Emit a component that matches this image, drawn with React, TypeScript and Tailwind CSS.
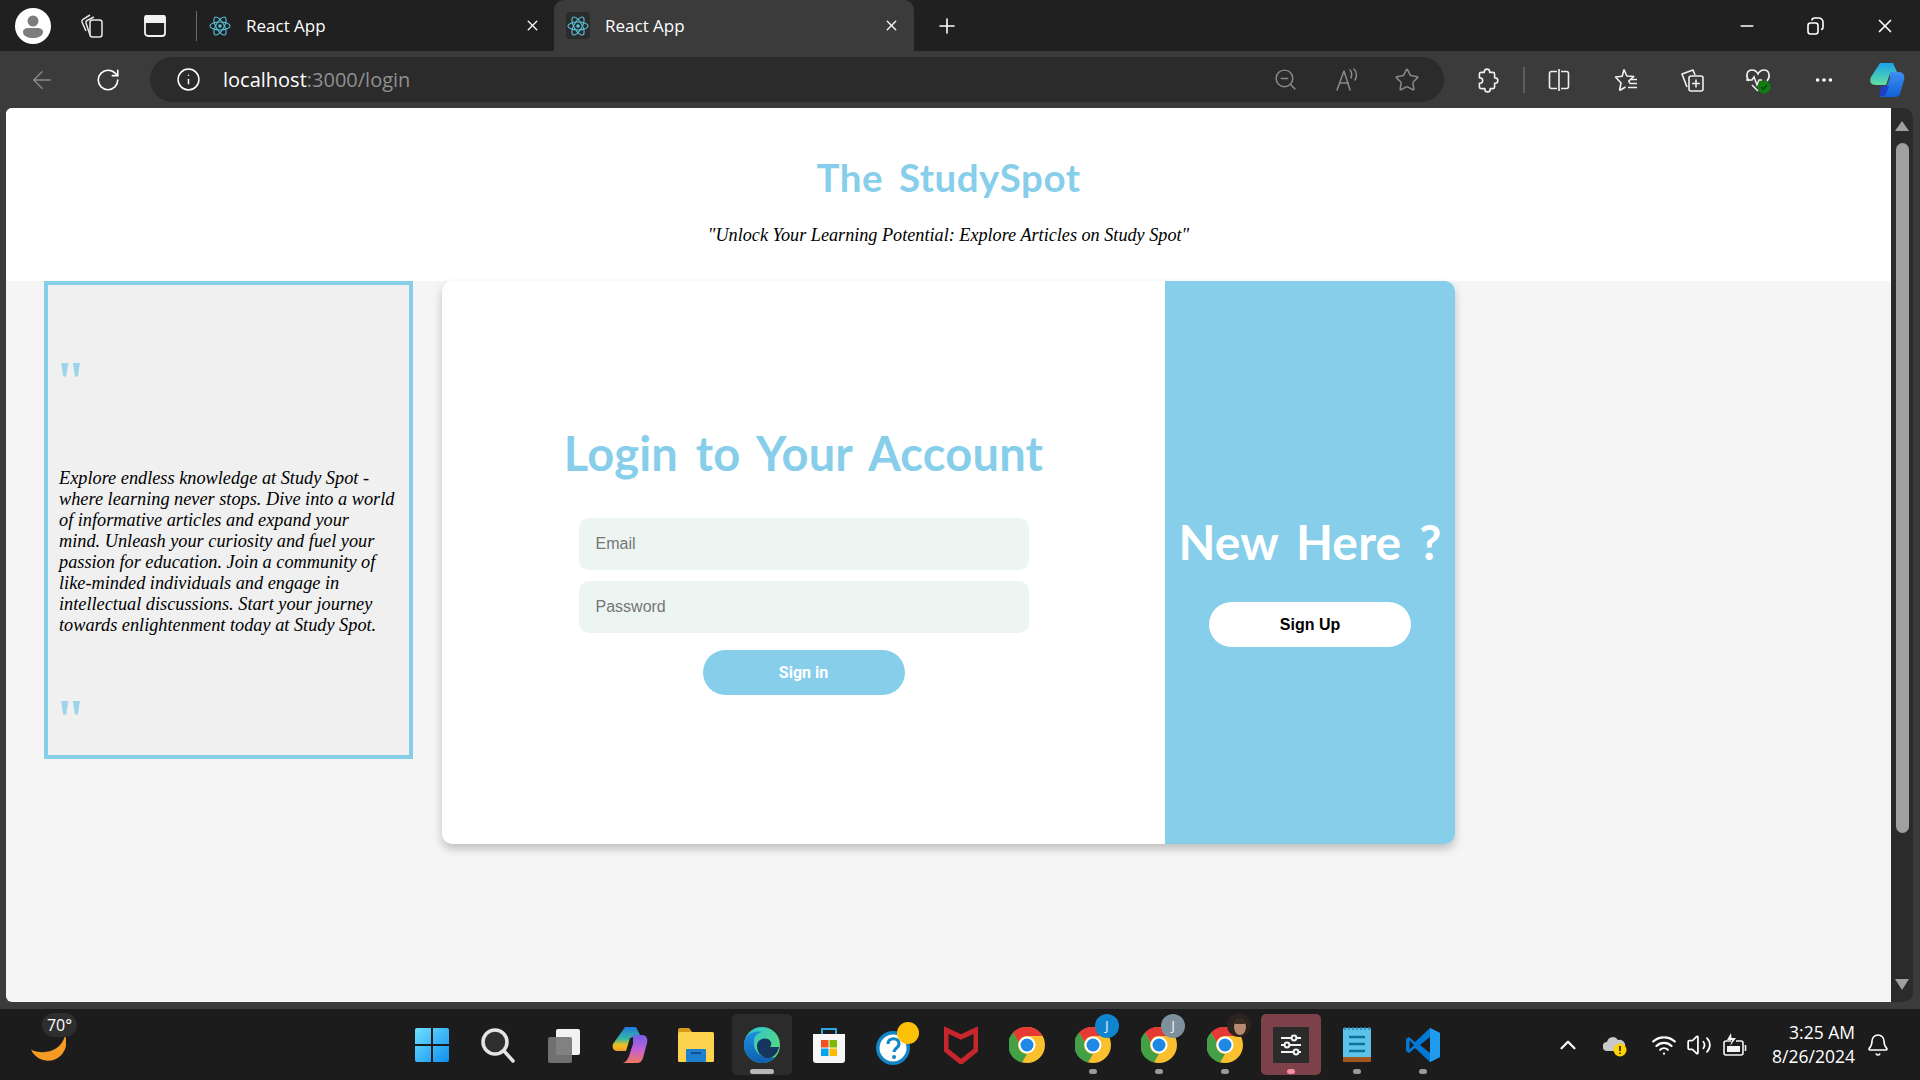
import { ArrowLeft, RotateCw, Info, ZoomOut, Star, MoreHorizontal, Minus, X, Plus, ChevronUp, Wifi, Volume2, Bell } from 'lucide-react';

function ReactIcon() {
  return (
    <svg width="22" height="22" viewBox="-12 -12 24 24" fill="none" stroke="#58c4dc" strokeWidth="1.2">
      <circle r="2" fill="#58c4dc" stroke="none" />
      <ellipse rx="11" ry="4.4" />
      <ellipse rx="11" ry="4.4" transform="rotate(60)" />
      <ellipse rx="11" ry="4.4" transform="rotate(120)" />
    </svg>
  );
}

function Avatar() {
  return (
    <svg width="36" height="36" viewBox="0 0 36 36">
      <circle cx="18" cy="18" r="18" fill="#fff" />
      <circle cx="18" cy="13" r="5.5" fill="#7d7d7d" />
      <path d="M8 24c0-3 3-4 5-4h10c2 0 5 1 5 4 0 4-5 6-10 6s-10-2-10-6z" fill="#7d7d7d" />
    </svg>
  );
}

function CollectionsIcon() {
  return (
    <svg width="26" height="26" viewBox="0 0 26 26" fill="none" stroke="#e8e8e8" strokeWidth="1.5" strokeLinejoin="round">
      <rect x="11" y="7" width="12" height="17" rx="2.5" />
      <path d="M11 22 7 10c-.3-1 .2-2 1-2.500L15 4" />
      <path d="M7 18 3 9c-.4-1 0-2 1-2.600L11 2" />
    </svg>
  );
}

function TabsIcon() {
  return (
    <svg width="24" height="24" viewBox="0 0 24 24" fill="none" stroke="#f2f2f2" strokeWidth="1.8">
      <rect x="2" y="2" width="20" height="20" rx="3" />
      <path d="M2 3.5A1.5 1.5 0 0 1 3.5 2h17A1.5 1.5 0 0 1 22 3.5V8H2z" fill="#f2f2f2" />
    </svg>
  );
}

function ReadAloud() {
  return (
    <svg width="26" height="26" viewBox="0 0 26 26" fill="none" stroke="#8a8a8a" strokeWidth="1.5" strokeLinecap="round" strokeLinejoin="round">
      <path d="M3 23 10 4l6 19M5.500 16h9" />
      <path d="M16 3c2 2 2 5 1 8M20 2c3 3 3 8 1 11" />
    </svg>
  );
}

function PuzzleIcon() {
  return (
    <svg width="26" height="26" viewBox="0 0 24 24" fill="none" stroke="#f0f0f0" strokeWidth="1.5" strokeLinejoin="round">
      <path d="M9.500 4.500a2.500 2.500 0 0 1 5 0V5h3a1.500 1.500 0 0 1 1.500 1.500V10h.5a2.500 2.500 0 0 1 0 5H19v3.500a1.500 1.500 0 0 1-1.500 1.500H15v.5a2.500 2.500 0 0 1-5 0V20H6.500A1.500 1.500 0 0 1 5 18.500V15h.5a2.500 2.500 0 0 0 0-5H5V6.500A1.500 1.500 0 0 1 6.500 5h3z" />
    </svg>
  );
}

function SplitIcon() {
  return (
    <svg width="24" height="24" viewBox="0 0 24 24" fill="none" stroke="#f0f0f0" strokeWidth="1.6">
      <path d="M10 3.500H4.500a2 2 0 0 0-2 2v13a2 2 0 0 0 2 2H10M14 3.500h5.500a2 2 0 0 1 2 2v13a2 2 0 0 1-2 2H14M12 1v22" />
    </svg>
  );
}

function FavoritesIcon() {
  return (
    <svg width="26" height="26" viewBox="0 0 26 26" fill="none" stroke="#f0f0f0" strokeWidth="1.6" strokeLinejoin="round">
      <path d="M11 2.500 13.800 9l7 .5-5 4.500 1 2.500M6.500 23.500 8 16 2.500 10l6.700-.8L11 2.500M6.500 23.500l6-3.500" />
      <path d="M17 12.500h7M17 16.500h7M15 20.500h9" />
    </svg>
  );
}

function AddCollection() {
  return (
    <svg width="26" height="26" viewBox="0 0 26 26" fill="none" stroke="#f0f0f0" strokeWidth="1.6" strokeLinejoin="round">
      <rect x="10" y="9" width="14" height="15" rx="2" />
      <path d="M17 12.500v8M13 16.500h8" />
      <path d="M8 20 3 7l11-4 2 5" />
    </svg>
  );
}

function HeartIcon() {
  return (
    <svg width="30" height="30" viewBox="0 0 30 30" fill="none">
      <path d="M6 16C2 11 4 5 9 5c3 0 5 2 6 4 1-2 3-4 6-4 5 0 7 6 3 11" stroke="#f0f0f0" strokeWidth="1.6" />
      <path d="M3 15h6l2-3 3 8 2-5h3M9 20l6 6" stroke="#f0f0f0" strokeWidth="1.5" />
      <circle cx="21" cy="22" r="6.500" fill="#107c10" />
      <path d="m18.500 22 2 2 3.500-4" stroke="#0b3d0b" strokeWidth="1.3" />
    </svg>
  );
}

function CopilotIcon() {
  return (
    <svg width="36" height="36" viewBox="0 0 36 36">
      <defs>
        <linearGradient id="cpa" x1="0" y1="0" x2="0" y2="1">
          <stop offset="0" stopColor="#1aa3e8" />
          <stop offset="1" stopColor="#5fe0a0" />
        </linearGradient>
        <linearGradient id="cpb" x1="0" y1="0" x2="0" y2="1">
          <stop offset="0" stopColor="#3f8ff0" />
          <stop offset="1" stopColor="#0f62d8" />
        </linearGradient>
      </defs>
      <path d="M11 1h13l4 9-7 2-4 11H7C2 23 0 20 2 15z" fill="url(#cpa)" />
      <path d="M21 10h10c4 1 5 4 4 8l-4 14c-1 2-3 3-5 3H11l4-5 6-14z" fill="url(#cpb)" />
      <path d="M12 24h8l-4 10h-6z" fill="#1f3fc4" />
    </svg>
  );
}

function StartIcon() {
  return (
    <svg width="36" height="36" viewBox="0 0 36 36">
      <defs>
        <linearGradient id="win" x1="0" y1="0" x2="1" y2="1">
          <stop offset="0" stopColor="#6fe0ff" />
          <stop offset="1" stopColor="#0f8ff0" />
        </linearGradient>
      </defs>
      <path d="M1 3a2 2 0 0 1 2-2h14v16H1zM19 1h14a2 2 0 0 1 2 2v14H19zM1 19h16v16H3a2 2 0 0 1-2-2zM19 19h16v14a2 2 0 0 1-2 2H19z" fill="url(#win)" />
    </svg>
  );
}

function SearchIcon() {
  return (
    <svg width="36" height="36" viewBox="0 0 36 36" fill="none">
      <circle cx="15" cy="15" r="12" fill="#2e2e2e" stroke="#e4e4e4" strokeWidth="3.5" />
      <path d="m24 24 9 10" stroke="#e4e4e4" strokeWidth="3.5" strokeLinecap="round" />
    </svg>
  );
}

function TaskView() {
  return (
    <svg width="36" height="36" viewBox="0 0 36 36">
      <rect x="10" y="2" width="24" height="26" rx="2" fill="#f2f2f2" />
      <rect x="2" y="10" width="24" height="26" rx="2" fill="#777777" fillOpacity="0.92" />
    </svg>
  );
}

function TaskCopilot() {
  return (
    <svg width="36" height="38" viewBox="0 0 36 38">
      <defs>
        <linearGradient id="tca" x1="0" y1="0" x2="0" y2="1">
          <stop offset="0" stopColor="#1f7ae0" />
          <stop offset="0.5" stopColor="#38b8a0" />
          <stop offset="0.75" stopColor="#f0c020" />
          <stop offset="1" stopColor="#f0a030" />
        </linearGradient>
        <linearGradient id="tcb" x1="0" y1="0" x2="0" y2="1">
          <stop offset="0" stopColor="#6f5fe8" />
          <stop offset="0.5" stopColor="#c060d8" />
          <stop offset="1" stopColor="#f07860" />
        </linearGradient>
      </defs>
      <path d="M13 1h11l4 8-10 3-4 13H5c-4 0-5-4-4-7z" fill="url(#tca)" />
      <path d="M21 9h10c4 1 5 4 4 8l-4 15c-1 3-3 5-6 5H11c3-1 5-4 6-7l4-12z" fill="url(#tcb)" />
    </svg>
  );
}

function FilesIcon() {
  return (
    <svg width="36" height="36" viewBox="0 0 36 36">
      <path d="M0 3a2 2 0 0 1 2-2h9l4 5h-15z" fill="#d99a1c" />
      <rect x="0" y="5" width="36" height="30" rx="1.500" fill="#fdd34d" />
      <rect x="8" y="22" width="20" height="13" rx="1" fill="#1c7fd0" />
      <rect x="13" y="25" width="10" height="2" fill="#0d4f8f" />
    </svg>
  );
}

function EdgeIcon() {
  return (
    <svg width="38" height="38" viewBox="0 0 38 38">
      <defs>
        <linearGradient id="eda" x1="0" y1="0" x2="1" y2="1">
          <stop offset="0" stopColor="#2cc5d8" />
          <stop offset="1" stopColor="#5fdc6c" />
        </linearGradient>
        <linearGradient id="edb" x1="0" y1="0" x2="0" y2="1">
          <stop offset="0" stopColor="#1d8fe0" />
          <stop offset="1" stopColor="#0f5fb0" />
        </linearGradient>
      </defs>
      <circle cx="19" cy="19" r="18" fill="url(#eda)" />
      <path d="M1 19C1 9 10 4 19 6c-6 1-9 6-8 13 1 9 11 15 21 12-3 4-8 6-13 6C9 37 1 29 1 19z" fill="url(#edb)" />
      <path d="M14 20c0-6 6-9 11-7 4 2 4 6 2 8h9c-1 5-4 9-9 11-7 1-13-5-13-12z" fill="#16365f" />
    </svg>
  );
}

function StoreIcon() {
  return (
    <svg width="36" height="38" viewBox="0 0 36 38">
      <path d="M11 8V3h14v5" fill="none" stroke="#2ba8e0" strokeWidth="2" />
      <path d="M2 8h32v26a3 3 0 0 1-3 3H5a3 3 0 0 1-3-3z" fill="#f7f7f7" />
      <rect x="10" y="14" width="7.500" height="7.500" fill="#f25022" />
      <rect x="18.500" y="14" width="7.500" height="7.500" fill="#7fba00" />
      <rect x="10" y="22.500" width="7.500" height="7.500" fill="#00a4ef" />
      <rect x="18.500" y="22.500" width="7.500" height="7.500" fill="#ffb900" />
    </svg>
  );
}

function HelpIcon() {
  return (
    <svg width="46" height="46" viewBox="0 0 46 46" className="translate-x-[2px]">
      <circle cx="19" cy="26" r="17" fill="#1185c8" />
      <circle cx="19" cy="26" r="13.500" fill="#fff" />
      <path d="M14 22c0-7 11-7 11 0 0 4-5 4-5 8" fill="none" stroke="#1185c8" strokeWidth="3.200" />
      <circle cx="20" cy="35" r="2" fill="#1185c8" />
      <circle cx="34" cy="11" r="11" fill="#ffc107" />
    </svg>
  );
}

function ShieldIcon() {
  return (
    <svg width="34" height="38" viewBox="0 0 34 38">
      <path d="M2 4 17 11 32 4v20L17 36 2 24z" fill="none" stroke="#c8262c" strokeWidth="5" />
    </svg>
  );
}

function ChromeIcon() {
  return (
    <svg width="36" height="36" viewBox="0 0 36 36">
      <circle cx="18" cy="18" r="18" fill="#fbc02d" />
      <path d="M18 0a18 18 0 0 1 15.600 9H18a9 9 0 0 0-8.500 6L4 5.500A18 18 0 0 1 18 0z" fill="#e53935" />
      <path d="M4 5.500 9.500 15a9 9 0 0 0 8.500 12l-5 8.400A18 18 0 0 1 4 5.500z" fill="#43a047" />
      <circle cx="18" cy="18" r="8.500" fill="#fff" />
      <circle cx="18" cy="18" r="6.500" fill="#1e88e5" />
    </svg>
  );
}

function ChromeProfile({ badge }: { badge: 'blue' | 'gray' | 'photo' }) {
  return (
    <div className="relative">
      <ChromeIcon />
      {badge === 'blue' && (
        <span className="absolute -top-[13px] -right-[8px] flex h-[24px] w-[24px] items-center justify-center rounded-full bg-[#0f85d0] text-[12px] text-white">J</span>
      )}
      {badge === 'gray' && (
        <span className="absolute -top-[13px] -right-[8px] flex h-[24px] w-[24px] items-center justify-center rounded-full bg-[#7e909c] text-[12px] text-white">J</span>
      )}
      {badge === 'photo' && (
        <svg className="absolute -top-[14px] -right-[8px]" width="24" height="24" viewBox="0 0 24 24">
          <circle cx="12" cy="12" r="12" fill="#2a2320" />
          <ellipse cx="13" cy="14" rx="6" ry="8" fill="#b98a72" />
          <path d="M7 9c2-4 9-4 12 0l-1 2H8z" fill="#3a2a22" />
        </svg>
      )}
    </div>
  );
}

function SettingsTile() {
  return (
    <svg width="36" height="36" viewBox="0 0 36 36">
      <rect width="36" height="36" fill="#2b2b2b" />
      <g stroke="#f4f4f4" strokeWidth="2" fill="#2b2b2b">
        <path d="M8 11h20M8 18h20M8 25h20" />
        <circle cx="21" cy="11" r="2.400" />
        <circle cx="14" cy="18" r="2.400" />
        <circle cx="23" cy="25" r="2.400" />
      </g>
    </svg>
  );
}

function NotepadIcon() {
  return (
    <svg width="30" height="38" viewBox="0 0 30 38">
      <rect x="1" y="2" width="28" height="34" rx="1" fill="#5cc4e8" />
      <rect x="1" y="31" width="28" height="5" fill="#a0561e" />
      <path d="M3 1v3M7 1v3M11 1v3M15 1v3M19 1v3M23 1v3M27 1v3" stroke="#2c7fa8" strokeWidth="1.500" />
      <path d="M7 11h16M7 18h16M7 25h16" stroke="#0f6f9c" strokeWidth="2.500" />
    </svg>
  );
}

function VsCodeIcon() {
  return (
    <svg width="36" height="36" viewBox="0 0 36 36">
      <path d="M25 1 35 6v24l-10 5-15-14-6 5-3-2V12l3-2 6 5z" fill="#0078d4" />
      <path d="M25 1 35 6v24l-10 5z" fill="#1f9cf0" />
      <path d="M25 10 15 18l10 8z" fill="#1c1c1c" />
      <path d="M4.500 13.500 9 18l-4.500 4.500z" fill="#1c1c1c" />
    </svg>
  );
}

function CloudWarn() {
  return (
    <svg width="24" height="26" viewBox="0 0 24 26">
      <path d="M4 19a4 4 0 0 1 0-9 6 6 0 0 1 11-2 5 5 0 0 1 3 11z" fill="#c9c9c9" />
      <circle cx="17" cy="18" r="6.500" fill="#ffd400" />
      <path d="M17 14v5M17 20.500V22" stroke="#1c1c1c" strokeWidth="1.600" />
    </svg>
  );
}

function BatteryIcon() {
  return (
    <svg width="26" height="28" viewBox="0 0 26 28" fill="none" stroke="#f4f4f4" strokeWidth="1.600" strokeLinejoin="round">
      <path d="M9 10H4a2 2 0 0 0-2 2v10a2 2 0 0 0 2 2h15a2 2 0 0 0 2-2V12a2 2 0 0 0-2-2h-5" />
      <path d="M23.500 14v6" />
      <path d="M9 2 5 9h5l-2 6 6-8H9.500z" fill="#f4f4f4" stroke="none" />
      <rect x="5" y="15" width="13" height="6" fill="#f4f4f4" stroke="none" />
    </svg>
  );
}

function TaskItem({ children, tile, dot }: { children: React.ReactNode; tile?: string; dot?: string }) {
  return (
    <div className={`relative flex h-[61px] w-[60px] items-center justify-center rounded-[5px] ${tile ?? ''}`}>
      {children}
      {dot && <span className={`absolute bottom-[1px] h-[5px] rounded-full ${dot}`} />}
    </div>
  );
}

function Quote() {
  return <div className="-ml-[4px] h-[46px] text-[56px] leading-[46px] font-bold text-[#87ceeb] opacity-80">"</div>;
}

export default function App() {
  return (
    <div className="flex h-screen w-screen flex-col overflow-hidden bg-[#3b3b3b] [font-family:'Open_Sans',sans-serif]">
      {/* tab strip */}
      <div className="flex h-[51px] items-center bg-[#202020] text-white">
        <div className="ml-[15px]"><Avatar /></div>
        <div className="ml-[28px]"><CollectionsIcon /></div>
        <div className="ml-[38px]"><TabsIcon /></div>
        <div className="ml-[29px] h-[30px] w-px bg-[#6a6a6a]" />
        <div className="flex h-full w-[357px] items-center pl-[12px] pr-[13px]">
          <ReactIcon />
          <span className="ml-[15px] flex-1 text-[17px]">React App</span>
          <X size={17} strokeWidth={1.8} />
        </div>
        <div className="flex h-full w-[360px] items-center self-end rounded-t-[10px] bg-[#3b3b3b] pl-[12px] pr-[14px]">
          <span className="flex h-[27px] w-[24px] items-center justify-center rounded-[4px] bg-[#2b2b2b]"><ReactIcon /></span>
          <span className="ml-[15px] flex-1 text-[17px]">React App</span>
          <X size={17} strokeWidth={1.8} />
        </div>
        <Plus className="ml-[21px]" size={24} strokeWidth={1.6} />
        <div className="ml-auto flex items-center pr-[24px]">
          <Minus size={20} strokeWidth={1.8} />
          <svg className="ml-[49px]" width="18" height="18" viewBox="0 0 18 18" fill="none" stroke="#fff" strokeWidth="1.6">
            <rect x="2" y="6" width="10" height="11" rx="2.500" />
            <path d="M6 3.500C6 2 7 1 8.500 1H13c2 0 4 2 4 4v5c0 1.500-1 2.500-2 2.500" />
          </svg>
          <X className="ml-[50px]" size={22} strokeWidth={1.8} />
        </div>
      </div>

      {/* toolbar */}
      <div className="flex h-[57px] items-center text-white">
        <ArrowLeft className="ml-[28px] text-[#8a8a8a]" size={28} strokeWidth={1.2} />
        <RotateCw className="ml-[39px]" size={26} strokeWidth={1.5} />
        <div className="ml-[29px] flex h-[45px] w-[1294px] items-center rounded-full bg-[#2b2b2b] pl-[26px]">
          <Info size={25} strokeWidth={1.4} />
          <div className="ml-[22px] text-[20px]">localhost<span className="text-[#8f8f8f]">:3000/login</span></div>
          <div className="ml-auto flex items-center pr-[24px] text-[#8a8a8a]">
            <ZoomOut size={25} strokeWidth={1.4} />
            <span className="ml-[36px]"><ReadAloud /></span>
            <Star className="ml-[34px]" size={26} strokeWidth={1.4} />
          </div>
        </div>
        <span className="ml-[30px]"><PuzzleIcon /></span>
        <div className="ml-[23px] h-[26px] w-[2px] bg-[#5c5c5c]" />
        <span className="ml-[22px]"><SplitIcon /></span>
        <span className="ml-[42px]"><FavoritesIcon /></span>
        <span className="ml-[40px]"><AddCollection /></span>
        <span className="ml-[38px]"><HeartIcon /></span>
        <MoreHorizontal className="ml-[40px]" size={22} strokeWidth={2} />
        <span className="ml-[34px]"><CopilotIcon /></span>
      </div>

      {/* page + scrollbar */}
      <div className="flex h-[894px]">
        <div className="ml-[6px] flex w-[1885px] flex-col overflow-hidden rounded-l-[6px] bg-[#f5f5f5]">
          <header className="flex h-[173px] flex-col items-center bg-white">
            <h1 className="mt-[41px] text-[38.500px] leading-[56px] font-bold tracking-[0.5px] text-[#87ceeb] [font-family:'Lato',sans-serif] [word-spacing:6px]">The StudySpot</h1>
            <p className="mt-[18px] text-[18.200px] leading-[24px] text-black italic [font-family:'Liberation_Serif',serif]">"Unlock Your Learning Potential: Explore Articles on Study Spot"</p>
          </header>

          <div className="flex flex-1 items-start">
            <aside className="ml-[38px] flex h-[478px] w-[369px] flex-col border-4 border-[#87ceeb] bg-[#f0f0f0] px-[11px] [font-family:'Liberation_Serif',serif]">
              <div className="mt-[74px]"><Quote /></div>
              <p className="mt-[63px] text-[18.300px] leading-[21px] text-black italic">
                Explore endless knowledge at Study Spot -<br />
                where learning never stops. Dive into a world<br />
                of informative articles and expand your<br />
                mind. Unleash your curiosity and fuel your<br />
                passion for education. Join a community of<br />
                like-minded individuals and engage in<br />
                intellectual discussions. Start your journey<br />
                towards enlightenment today at Study Spot.
              </p>
              <div className="mt-[61px]"><Quote /></div>
            </aside>

            <main className="ml-[29px] flex h-[563px] w-[1013px] overflow-hidden rounded-[10px] bg-white shadow-[0_5px_10px_rgba(0,0,0,0.22)]">
              <div className="flex w-[723px] flex-col items-center pt-[139px]">
                <h2 className="text-[47px] leading-[66px] font-bold tracking-[0.2px] text-[#87ceeb] [font-family:'Lato',sans-serif] [word-spacing:6px]">Login to Your Account</h2>
                <form className="mt-[32px] flex flex-col items-center gap-[11px] [font-family:'Liberation_Sans',sans-serif]">
                  <input placeholder="Email" className="h-[52px] w-[450px] rounded-[10px] bg-[#edf5f3] px-[17px] text-[16px] outline-none placeholder:text-[#757575]" />
                  <input placeholder="Password" className="h-[52px] w-[450px] rounded-[10px] bg-[#edf5f3] px-[17px] text-[16px] outline-none placeholder:text-[#757575]" />
                  <button type="button" className="mt-[6px] h-[45px] w-[202px] rounded-full bg-[#87ceeb] text-[16px] font-bold text-white [font-family:'Roboto',sans-serif]">Sign in</button>
                </form>
              </div>
              <div className="flex w-[290px] flex-col items-center bg-[#87ceeb] pt-[228px]">
                <h2 className="text-[48px] leading-[66px] font-bold tracking-[0.2px] text-white [font-family:'Lato',sans-serif] [word-spacing:6px]">New Here ?</h2>
                <button type="button" className="mt-[27px] h-[45px] w-[202px] rounded-full bg-white text-[16px] font-bold text-black [font-family:'Liberation_Sans',sans-serif]">Sign Up</button>
              </div>
            </main>
          </div>
        </div>

        {/* scrollbar */}
        <div className="flex w-[22px] flex-col items-center rounded-r-[10px] bg-[#2b2b2b]">
          <span className="mt-[13px] h-0 w-0 border-x-[7px] border-b-[10px] border-x-transparent border-b-[#a0a0a0]" />
          <span className="mt-[12px] h-[690px] w-[13px] rounded-full bg-[#a0a0a0]" />
          <span className="mt-[146px] h-0 w-0 border-x-[7px] border-t-[11px] border-x-transparent border-t-[#a0a0a0]" />
        </div>
      </div>

      {/* taskbar */}
      <footer className="mt-[7px] flex h-[71px] items-center bg-[#1c1c1c] text-white">
        <div className="relative ml-[31px] h-[50px] w-[50px]">
          <svg className="absolute top-[15px] left-0" width="35" height="33" viewBox="0 0 33 30">
            <path d="M32 0A16 16 0 1 1 0 13c9 5 28 4 32-13z" fill="#f59a23" />
          </svg>
          <span className="absolute top-[-7px] left-[11px] flex h-[24px] w-[35px] items-center justify-center rounded-full bg-[#2e2e2e] text-[16px]">70°</span>
        </div>

        <div className="ml-[321px] flex items-center gap-[6.100px]">
          <TaskItem><StartIcon /></TaskItem>
          <TaskItem><SearchIcon /></TaskItem>
          <TaskItem><TaskView /></TaskItem>
          <TaskItem><TaskCopilot /></TaskItem>
          <TaskItem><FilesIcon /></TaskItem>
          <TaskItem tile="bg-[#2b2b2b]" dot="w-[24px] bg-[#b8b8b8]"><EdgeIcon /></TaskItem>
          <TaskItem><StoreIcon /></TaskItem>
          <TaskItem><HelpIcon /></TaskItem>
          <TaskItem><ShieldIcon /></TaskItem>
          <TaskItem><ChromeIcon /></TaskItem>
          <TaskItem dot="w-[8px] bg-[#9a9a9a]"><ChromeProfile badge="blue" /></TaskItem>
          <TaskItem dot="w-[8px] bg-[#9a9a9a]"><ChromeProfile badge="gray" /></TaskItem>
          <TaskItem dot="w-[8px] bg-[#9a9a9a]"><ChromeProfile badge="photo" /></TaskItem>
          <TaskItem tile="bg-[#7d4149]" dot="w-[8px] bg-[#f58ca0]"><SettingsTile /></TaskItem>
          <TaskItem dot="w-[8px] bg-[#9a9a9a]"><NotepadIcon /></TaskItem>
          <TaskItem dot="w-[8px] bg-[#9a9a9a]"><VsCodeIcon /></TaskItem>
        </div>

        <div className="ml-auto flex items-center pr-[30px]">
          <ChevronUp size={26} strokeWidth={2} />
          <span className="ml-[22px]"><CloudWarn /></span>
          <Wifi className="ml-[24px]" size={26} strokeWidth={2} />
          <Volume2 className="ml-[9px]" size={26} strokeWidth={1.6} />
          <span className="ml-[10px]"><BatteryIcon /></span>
          <div className="ml-[24px] text-right text-[17.500px] leading-[24px] -translate-y-px">
            <div>3:25 AM</div>
            <div>8/26/2024</div>
          </div>
          <Bell className="ml-[11px]" size={24} strokeWidth={1.6} />
        </div>
      </footer>
    </div>
  );
}
